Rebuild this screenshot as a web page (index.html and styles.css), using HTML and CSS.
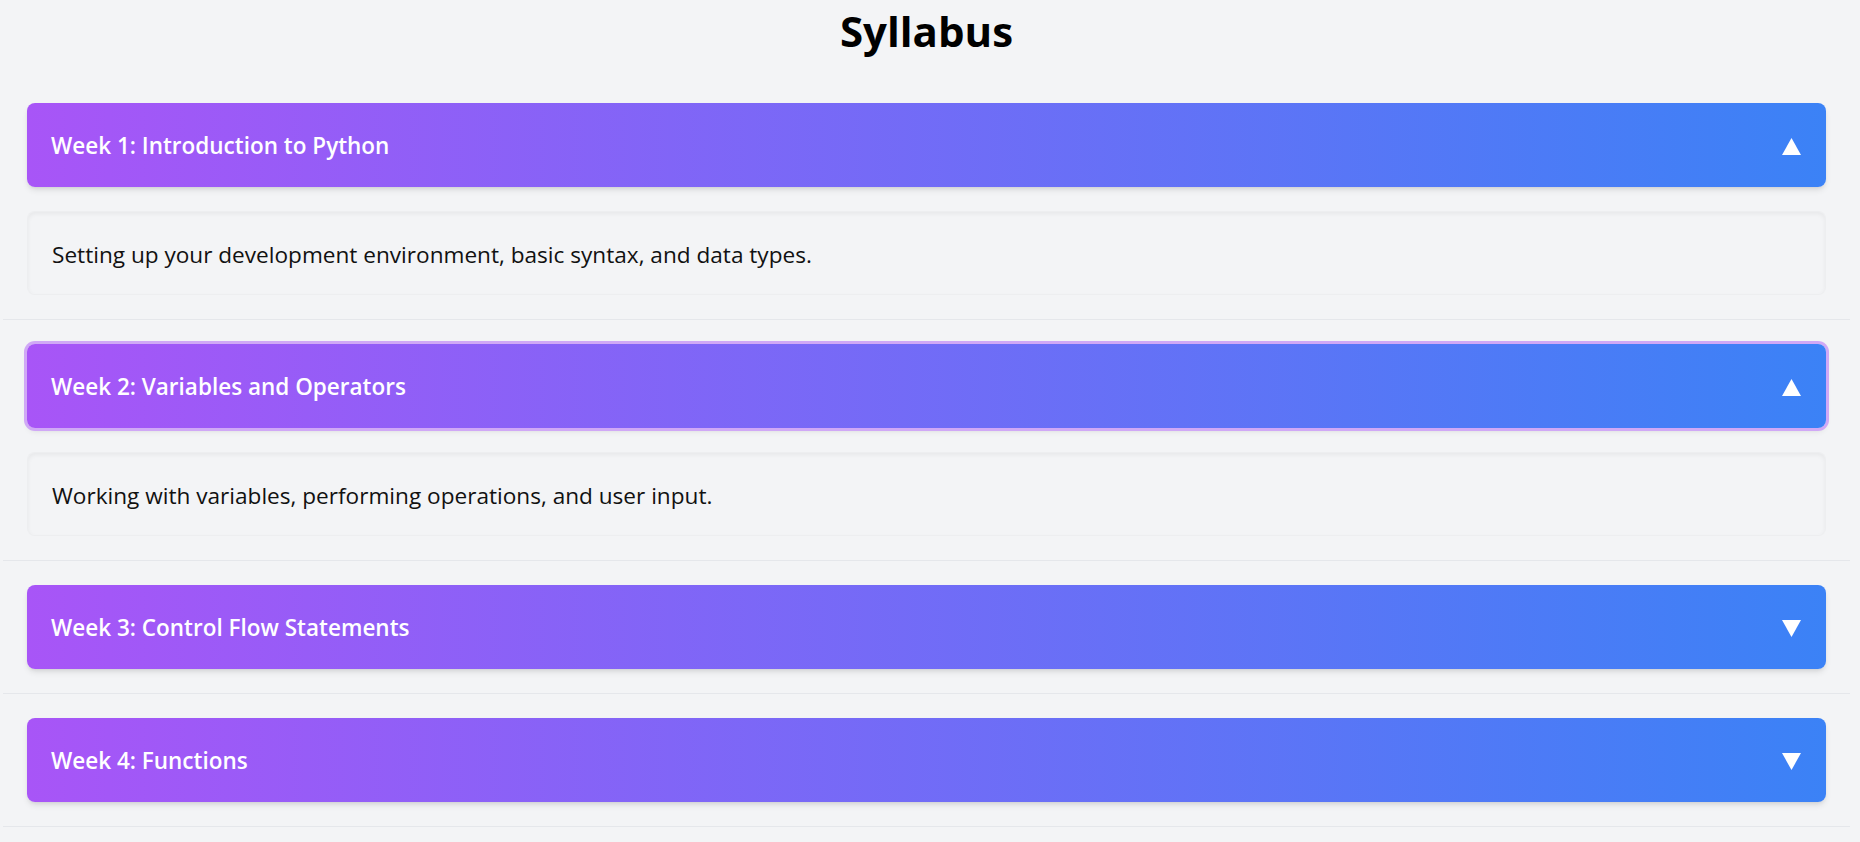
FILE: index.html
```html
<!DOCTYPE html>
<html lang="en">
<head>
<meta charset="utf-8">
<title>Syllabus</title>
<link rel="stylesheet" href="styles.css">
</head>
<body>
<main class="page">
  <h1 class="title">Syllabus</h1>
  <div class="list">
    <section class="item">
      <button class="head">
        <span class="head-text">Week 1: Introduction to Python</span>
        <svg class="arrow" width="19" height="17" viewBox="0 0 19 17"><polygon points="9.5,0 19,17 0,17" fill="#fff"/></svg>
      </button>
      <div class="panel">Setting up your development environment, basic syntax, and data types.</div>
    </section>
    <section class="item">
      <button class="head focused">
        <span class="head-text">Week 2: Variables and Operators</span>
        <svg class="arrow" width="19" height="17" viewBox="0 0 19 17"><polygon points="9.5,0 19,17 0,17" fill="#fff"/></svg>
      </button>
      <div class="panel">Working with variables, performing operations, and user input.</div>
    </section>
    <section class="item">
      <button class="head">
        <span class="head-text">Week 3: Control Flow Statements</span>
        <svg class="arrow" width="19" height="17" viewBox="0 0 19 17"><polygon points="0,0 19,0 9.5,17" fill="#fff"/></svg>
      </button>
    </section>
    <section class="item">
      <button class="head">
        <span class="head-text">Week 4: Functions</span>
        <svg class="arrow" width="19" height="17" viewBox="0 0 19 17"><polygon points="0,0 19,0 9.5,17" fill="#fff"/></svg>
      </button>
    </section>
  </div>
</main>
</body>
</html>
```
FILE: styles.css
```css
* { box-sizing: border-box; }
html, body {
  margin: 0;
  padding: 0;
  background: #f3f4f6;
  font-family: "Open Sans", "Noto Sans", "Liberation Sans", sans-serif;
  color: #111111;
}
.page {
  margin: 0 10px 0 3px;
}
.title {
  margin: 0;
  height: 79px;
  display: flex;
  align-items: center;
  justify-content: center;
  padding-bottom: 18px;
  font-size: 42px;
  font-weight: 700;
  color: #000;
  line-height: 1;
}
.list {
  display: flex;
  flex-direction: column;
}
.item {
  padding: 24px;
  border-bottom: 1px solid #e5e7eb;
  display: flex;
  flex-direction: column;
  gap: 24px;
}
.head {
  display: flex;
  align-items: center;
  justify-content: space-between;
  width: 100%;
  height: 84px;
  padding: 0 25px 0 24px;
  border: none;
  border-radius: 8px;
  background: linear-gradient(to right, #a855f7, #3b82f6);
  box-shadow: 0 4px 6px -1px rgba(0,0,0,0.1), 0 2px 4px -2px rgba(0,0,0,0.1);
  color: #fff;
  font-family: inherit;
  cursor: pointer;
  text-align: left;
}
.head.focused {
  box-shadow: 0 0 0 3px #d0a8f6, 0 4px 6px -1px rgba(0,0,0,0.1), 0 2px 4px -2px rgba(0,0,0,0.1);
}
.head-text {
  font-size: 22.5px;
  font-weight: 600;
  line-height: 28px;
  color: #fff;
  padding-top: 2px;
}
.arrow {
  display: block;
  margin-top: 2px;
}
.panel {
  height: 84px;
  display: flex;
  align-items: center;
  padding: 3px 24px 0 24px;
  border-radius: 8px;
  background: #f3f4f6;
  border: 1px solid rgba(0,0,0,0.025);
  box-shadow: inset 0 2px 4px 0 rgba(0,0,0,0.05);
  font-size: 22.6px;
  line-height: 28px;
  color: #111;
}
```
